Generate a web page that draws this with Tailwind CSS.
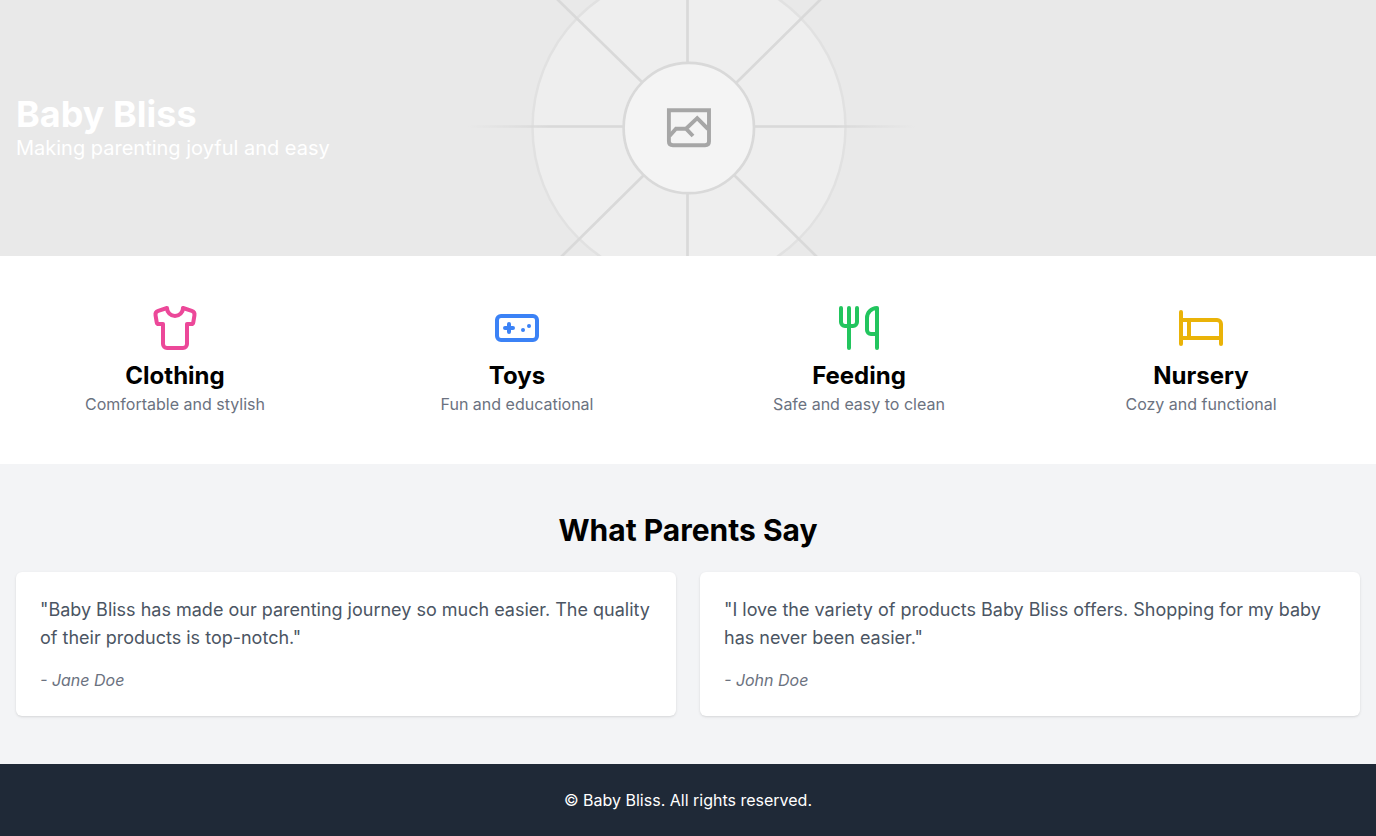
<!DOCTYPE html>
<html lang="en">
<head>
<meta charset="utf-8">
<meta name="viewport" content="width=device-width, initial-scale=1">
<title>Baby Bliss</title>
<script src="https://cdn.jsdelivr.net/npm/@tailwindcss/browser@4"></script>
</head>
<body class="flex min-h-screen flex-col bg-white font-[Inter,sans-serif] text-base text-black">
<header class="relative flex h-64 items-center overflow-hidden bg-[#e9e9e9]">
  <svg class="absolute top-0 left-1/2 h-64 w-[480px] -translate-x-1/2" viewBox="448 0 480 256" fill="none" aria-hidden="true">
    <defs>
      <linearGradient id="fade" gradientUnits="userSpaceOnUse" x1="468" x2="916" y1="0" y2="0">
        <stop offset="0" stop-color="#d9d9d9" stop-opacity="0"/>
        <stop offset=".18" stop-color="#d9d9d9"/>
        <stop offset=".82" stop-color="#d9d9d9"/>
        <stop offset="1" stop-color="#d9d9d9" stop-opacity="0"/>
      </linearGradient>
    </defs>
    <circle cx="689" cy="127.500" r="156.500" fill="#eee" stroke="#e1e1e1" stroke-width="2.500"/>
    <rect x="468" y="125.200" width="448" height="2.600" fill="url(#fade)"/>
    <path d="M687.500 0V256M557 -1L645 85M821 -1L734 85M647 172L561 257M731 172L817 257" stroke="#d9d9d9" stroke-width="2.700"/>
    <circle cx="688.800" cy="128" r="65.200" fill="#f4f4f4" stroke="#d9d9d9" stroke-width="2.700"/>
    <path d="M668.900 110.200H709V141.500Q709 145.200 705 145.200H673Q668.900 145.200 668.900 141.500Z" stroke="#a6a6a6" stroke-width="3.900"/>
    <path d="M669.500 136L676 128.700H686L697.200 118.200L708 129M686 128.700L693 136" stroke="#a6a6a6" stroke-width="3.900"/>
  </svg>
  <div class="relative px-4 text-white">
    <h1 class="text-4xl font-bold">Baby Bliss</h1>
    <p class="text-xl">Making parenting joyful and easy</p>
  </div>
</header>
<main class="flex-1 bg-[#f3f4f6]">
  <section class="grid grid-cols-2 gap-6 bg-white px-4 py-12 text-center md:grid-cols-4" aria-label="Categories">
    <div class="flex flex-col items-center">
      <svg class="mb-2 size-12 text-[#ec4899]" viewBox="0 0 24 24" fill="none" stroke="currentColor" stroke-width="2" stroke-linecap="round" stroke-linejoin="round" aria-hidden="true"><path d="M20.38 3.46 16 2a4 4 0 0 1-8 0L3.62 3.46a2 2 0 0 0-1.34 2.23l.58 3.47a1 1 0 0 0 .99.84H6v10c0 1.100.9 2 2 2h8a2 2 0 0 0 2-2V10h2.150a1 1 0 0 0 .99-.84l.58-3.470a2 2 0 0 0-1.340-2.230z"/></svg>
      <h2 class="text-2xl font-bold">Clothing</h2>
      <p class="text-[#6b7280]">Comfortable and stylish</p>
    </div>
    <div class="flex flex-col items-center">
      <svg class="mb-2 size-12 text-[#3b82f6]" viewBox="0 0 24 24" fill="none" stroke="currentColor" stroke-width="2" stroke-linecap="round" stroke-linejoin="round" aria-hidden="true"><path d="M6 12h4M8 10v4M15 13h.01M18 11h.01"/><rect width="20" height="12" x="2" y="6" rx="2"/></svg>
      <h2 class="text-2xl font-bold">Toys</h2>
      <p class="text-[#6b7280]">Fun and educational</p>
    </div>
    <div class="flex flex-col items-center">
      <svg class="mb-2 size-12 text-[#22c55e]" viewBox="0 0 24 24" fill="none" stroke="currentColor" stroke-width="2" stroke-linecap="round" stroke-linejoin="round" aria-hidden="true"><path d="M3 2v7c0 1.100.9 2 2 2h4a2 2 0 0 0 2-2V2M7 2v20M21 15V2a5 5 0 0 0-5 5v6c0 1.100.9 2 2 2h3Zm0 0v7"/></svg>
      <h2 class="text-2xl font-bold">Feeding</h2>
      <p class="text-[#6b7280]">Safe and easy to clean</p>
    </div>
    <div class="flex flex-col items-center">
      <svg class="mb-2 size-12 text-[#eab308]" viewBox="0 0 24 24" fill="none" stroke="currentColor" stroke-width="2" stroke-linecap="round" stroke-linejoin="round" aria-hidden="true"><path d="M2 4v16M2 8h18a2 2 0 0 1 2 2v10M2 17h20M6 8v9"/></svg>
      <h2 class="text-2xl font-bold">Nursery</h2>
      <p class="text-[#6b7280]">Cozy and functional</p>
    </div>
  </section>
  <section class="px-4 py-12">
    <h2 class="mb-6 text-center text-3xl font-bold">What Parents Say</h2>
    <div class="grid gap-6 md:grid-cols-2">
      <figure class="rounded-md bg-white p-6 shadow-sm">
        <blockquote class="mb-4 text-lg text-[#4b5563]">"Baby Bliss has made our parenting journey so much easier. The quality of their products is top-notch."</blockquote>
        <figcaption class="text-[#6b7280] italic">- Jane Doe</figcaption>
      </figure>
      <figure class="rounded-md bg-white p-6 shadow-sm">
        <blockquote class="mb-4 text-lg text-[#4b5563]">"I love the variety of products Baby Bliss offers. Shopping for my baby has never been easier."</blockquote>
        <figcaption class="text-[#6b7280] italic">- John Doe</figcaption>
      </figure>
    </div>
  </section>
</main>
<footer class="bg-[#1f2937] p-6 text-center text-white">
  <p>© Baby Bliss. All rights reserved.</p>
</footer>
</body>
</html>
